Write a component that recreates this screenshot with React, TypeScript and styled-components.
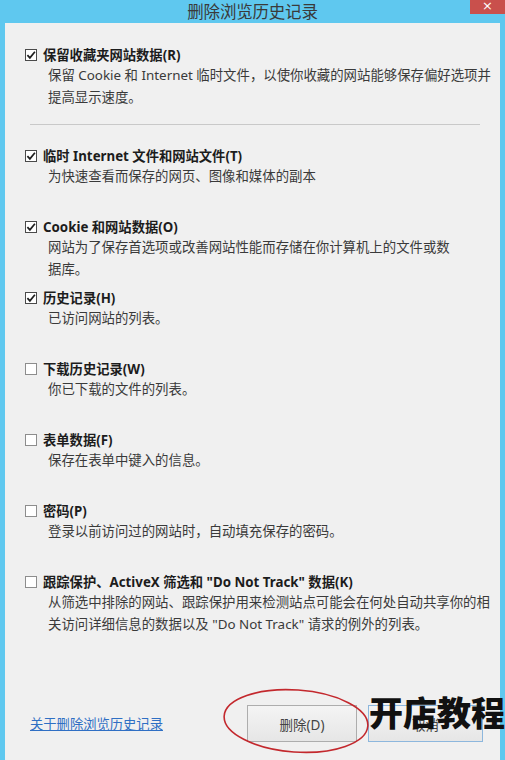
import React from "react";
import styled, { createGlobalStyle } from "styled-components";

const GlobalStyle = createGlobalStyle`
  html, body { margin: 0; padding: 0; background: #5fc8ef; }
  body { font-family: "Noto Sans", "Noto Sans CJK SC", sans-serif; }
`;

const Window = styled.div`
  position: relative;
  width: 505px;
  height: 760px;
  box-sizing: border-box;
  padding: 0 5px;
  background: #5fc8ef;
  display: flex;
  flex-direction: column;
  overflow: hidden;
`;

const TitleBar = styled.div`
  height: 23px;
  flex: none;
  display: flex;
  justify-content: center;
  align-items: flex-start;
`;

const Title = styled.div`
  font-family: "Noto Sans CJK SC", sans-serif;
  font-size: 16.5px;
  line-height: 20px;
  margin-top: 1px;
  color: #3a3a3a;
  letter-spacing: -0.2px;
`;

const CloseButton = styled.div`
  position: absolute;
  top: 0;
  right: 0;
  width: 35px;
  height: 14px;
  background: #c9504c;
  color: #fff;
  font-family: "DejaVu Sans", sans-serif;
  font-size: 13px;
  line-height: 11px;
  text-align: center;
`;

const Body = styled.div`
  flex: 1;
  background: #f0f0f0;
  box-sizing: border-box;
  padding: 23px 6px 0 20px;
  display: flex;
  flex-direction: column;
`;

const Section = styled.div<{ $height?: number }>`
  flex: none;
  ${(p) => (p.$height ? `height: ${p.$height}px;` : "")}
`;

const LabelRow = styled.div`
  display: flex;
  align-items: center;
  gap: 6px;
  height: 18px;
`;

const Box = styled.div<{ $checked: boolean }>`
  width: 12px;
  height: 12px;
  box-sizing: border-box;
  border: 1px solid ${(p) => (p.$checked ? "#4a4a4a" : "#8d8d8d")};
  background: #fff;
  display: flex;
  align-items: center;
  justify-content: center;
  flex: none;
`;

const LabelText = styled.span`
  font-size: 13.3px;
  font-weight: 700;
  line-height: 18px;
  color: #1c1c1c;
  white-space: nowrap;
`;

const Desc = styled.div`
  padding-left: 23px;
  font-size: 13.4px;
  line-height: 22px;
  color: #3a3a3a;
`;

const DescLine = styled.span`
  display: block;
  white-space: nowrap;
`;

const Separator = styled.div`
  height: 1px;
  background: #c9c9c9;
  margin: 16px 14px 22px 5px;
  flex: none;
`;

const Footer = styled.div`
  margin-top: 61px;
  height: 37px;
  display: flex;
  align-items: center;
  padding: 0 11px 0 5px;
  flex: none;
`;

const HelpLink = styled.a`
  flex: 1;
  font-size: 13.3px;
  line-height: 18px;
  color: #2f6fc4;
  text-decoration: underline;
  cursor: pointer;
`;

const Buttons = styled.div`
  display: flex;
  gap: 11px;
`;

const Button = styled.div<{ $width: number; $focused?: boolean }>`
  width: ${(p) => p.$width}px;
  height: 37px;
  box-sizing: border-box;
  border: 1px solid ${(p) => (p.$focused ? "#8db7dd" : "#adadad")};
  background: linear-gradient(#f4f4f4, #e6e6e6);
  display: flex;
  align-items: center;
  justify-content: center;
  font-size: 13.5px;
  color: #444;
`;

const Ellipse = styled.svg`
  position: absolute;
  left: 220px;
  top: 686px;
  overflow: visible;
  pointer-events: none;
`;

const Watermark = styled.div`
  position: absolute;
  left: 369px;
  top: 692px;
  font-family: "Noto Sans CJK SC", sans-serif;
  font-size: 34px;
  line-height: 40px;
  font-weight: 900;
  color: #111;
  white-space: nowrap;
  pointer-events: none;
`;

const Check = () => (
  <svg width="10" height="10" viewBox="0 0 10 10">
    <path d="M1.4 5.2 L3.9 7.9 L8.9 1.8" fill="none" stroke="#1e1e1e" strokeWidth="1.7" />
  </svg>
);

type Item = { label: string; lines: string[]; checked: boolean };

const items: Item[] = [
  { label: "临时 Internet 文件和网站文件(T)", lines: ["为快速查看而保存的网页、图像和媒体的副本"], checked: true },
  {
    label: "Cookie 和网站数据(O)",
    lines: ["网站为了保存首选项或改善网站性能而存储在你计算机上的文件或数", "据库。"],
    checked: true,
  },
  { label: "历史记录(H)", lines: ["已访问网站的列表。"], checked: true },
  { label: "下载历史记录(W)", lines: ["你已下载的文件的列表。"], checked: false },
  { label: "表单数据(F)", lines: ["保存在表单中键入的信息。"], checked: false },
  { label: "密码(P)", lines: ["登录以前访问过的网站时，自动填充保存的密码。"], checked: false },
  {
    label: "跟踪保护、ActiveX 筛选和 \"Do Not Track\" 数据(K)",
    lines: [
      "从筛选中排除的网站、跟踪保护用来检测站点可能会在何处自动共享你的相",
      "关访问详细信息的数据以及 \"Do Not Track\" 请求的例外的列表。",
    ],
    checked: false,
  },
];

const Option = ({ item, height }: { item: Item; height?: number }) => (
  <Section $height={height}>
    <LabelRow>
      <Box $checked={item.checked}>{item.checked && <Check />}</Box>
      <LabelText>{item.label}</LabelText>
    </LabelRow>
    <Desc>
      {item.lines.map((l, i) => (
        <DescLine key={i}>{l}</DescLine>
      ))}
    </Desc>
  </Section>
);

export default function App() {
  return (
    <>
      <GlobalStyle />
      <Window>
        <TitleBar>
          <Title>删除浏览历史记录</Title>
        </TitleBar>
        <CloseButton>×</CloseButton>
        <Body>
          <Option
            item={{
              label: "保留收藏夹网站数据(R)",
              lines: ["保留 Cookie 和 Internet 临时文件，以使你收藏的网站能够保存偏好选项并", "提高显示速度。"],
              checked: true,
            }}
          />
          <Separator />
          {items.map((it, i) => (
            <Option key={i} item={it} height={71} />
          ))}
          <Footer>
            <HelpLink>关于删除浏览历史记录</HelpLink>
            <Buttons>
              <Button $width={110}>删除(D)</Button>
              <Button $width={115} $focused>
                取消
              </Button>
            </Buttons>
          </Footer>
        </Body>
        <Ellipse width="150" height="70">
          <ellipse
            cx="76"
            cy="35"
            rx="72"
            ry="31"
            fill="none"
            stroke="#c3282d"
            strokeWidth="1.6"
            transform="rotate(4 76 35)"
          />
        </Ellipse>
        <Watermark>开店教程</Watermark>
      </Window>
    </>
  );
}
